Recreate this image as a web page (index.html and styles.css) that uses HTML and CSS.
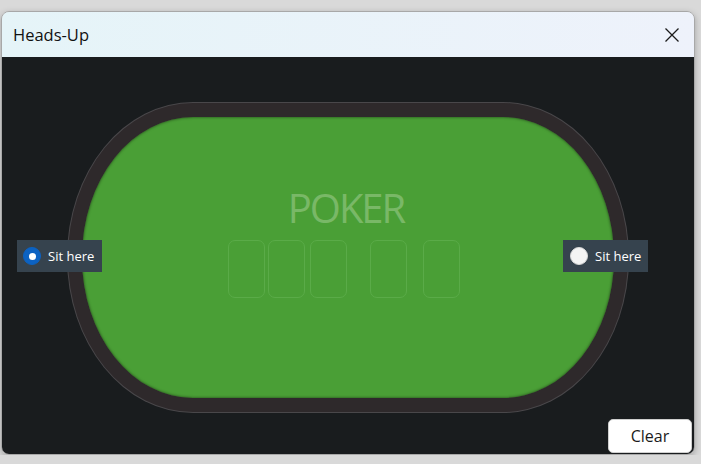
FILE: index.html
```html
<!DOCTYPE html>
<html>
<head>
<meta charset="utf-8">
<title>Heads-Up</title>
<link rel="stylesheet" href="styles.css">
</head>
<body>
	<div class="window">
		<div class="titlebar">
			<span class="caption">Heads-Up</span>
			<span class="close">
				<svg width="14" height="14" viewBox="0 0 14 14"><path d="M0.5 0.5 L13.5 13.5 M13.5 0.5 L0.5 13.5" stroke="#1b1b1b" stroke-width="1.3" fill="none"/></svg>
			</span>
		</div>
		<div class="content">
			<div class="table">
				<div class="felt">
					<div class="logo">POKER</div>
					<div class="cards">
						<div class="card"></div>
						<div class="card c2"></div>
						<div class="card c3"></div>
						<div class="card c4"></div>
						<div class="card c5"></div>
					</div>
				</div>
				<div class="seat seat-left">
					<span class="radio checked"></span>
					<span>Sit here</span>
				</div>
				<div class="seat seat-right">
					<span class="radio"></span>
					<span>Sit here</span>
				</div>
			</div>
			<button class="clear">Clear</button>
		</div>
	</div>
</body>
</html>
```

FILE: styles.css
```css
* {box-sizing: border-box;}

body {
	margin: 0;
	background: #d9d9d9;
	font-family: "Open Sans", "Noto Sans", sans-serif;
}

.window {
	margin: 11px 0 0 1px;
	width: 694px;
	height: 444px;
	border: 1px solid #a8a8a8;
	border-radius: 8px;
	overflow: hidden;
	box-shadow: 0 2px 6px rgba(0,0,0,0.25);
	display: flex;
	flex-direction: column;
}

.titlebar {
	height: 45px;
	display: flex;
	align-items: center;
	justify-content: space-between;
	padding: 0 15px 0 11px;
	background: linear-gradient(to right, #e5f4f8, #eef2fb);
}

.caption {
	font-size: 16.5px;
	color: #111;
}

.close {display: flex;}

.content {
	position: relative;
	flex: 1;
	background: #191c1e;
	display: flex;
	justify-content: center;
	padding-top: 46px;
}

.table {
	position: relative;
	width: 560px;
	height: 309px;
	border: 14px solid #2e292b;
	border-radius: 125px / 154px;
	background: #4a9f36;
	box-shadow: 0 0 0 1px #49474a, inset 0 0 3px rgba(0,0,0,0.6);
}

.felt {
	display: flex;
	flex-direction: column;
	align-items: center;
	padding-top: 71px;
}

.logo {
	font-size: 40px;
	line-height: 40px;
	letter-spacing: -2px;
	color: #79b867;
	margin-right: 4px;
}

.cards {
	display: flex;
	margin-top: 12px;
	margin-right: 8px;
}

.card {
	width: 37px;
	height: 58px;
	border: 1px solid #5aab48;
	border-radius: 7px;
}
.c2 {margin-left: 3px;}
.c3 {margin-left: 5px;}
.c4 {margin-left: 23px;}
.c5 {margin-left: 16px;}

.seat {
	position: absolute;
	top: 123px;
	height: 32px;
	width: 85px;
	display: flex;
	align-items: center;
	gap: 7px;
	padding-left: 7px;
	background: #36434e;
	color: #fff;
	font-size: 13px;
}
.seat-left {left: -65px; padding-left: 6px;}
.seat-right {left: 481px;}

.radio {
	width: 18px;
	height: 18px;
	border-radius: 50%;
	background: #f4f4f4;
	border: 1px solid #d8d8d8;
	display: flex;
	align-items: center;
	justify-content: center;
}
.radio.checked {
	background: #0c62c2;
	border-color: #0c62c2;
}
.radio.checked::after {
	content: "";
	width: 7px;
	height: 7px;
	border-radius: 50%;
	background: #fff;
}

.clear {
	position: absolute;
	right: 2px;
	bottom: 1px;
	width: 84px;
	height: 34px;
	background: #fff;
	border: 1px solid #cfcfcf;
	border-radius: 5px;
	font-family: "Open Sans", "Noto Sans", sans-serif;
	font-size: 16px;
	color: #1a1a1a;
	padding: 0;
}
```
